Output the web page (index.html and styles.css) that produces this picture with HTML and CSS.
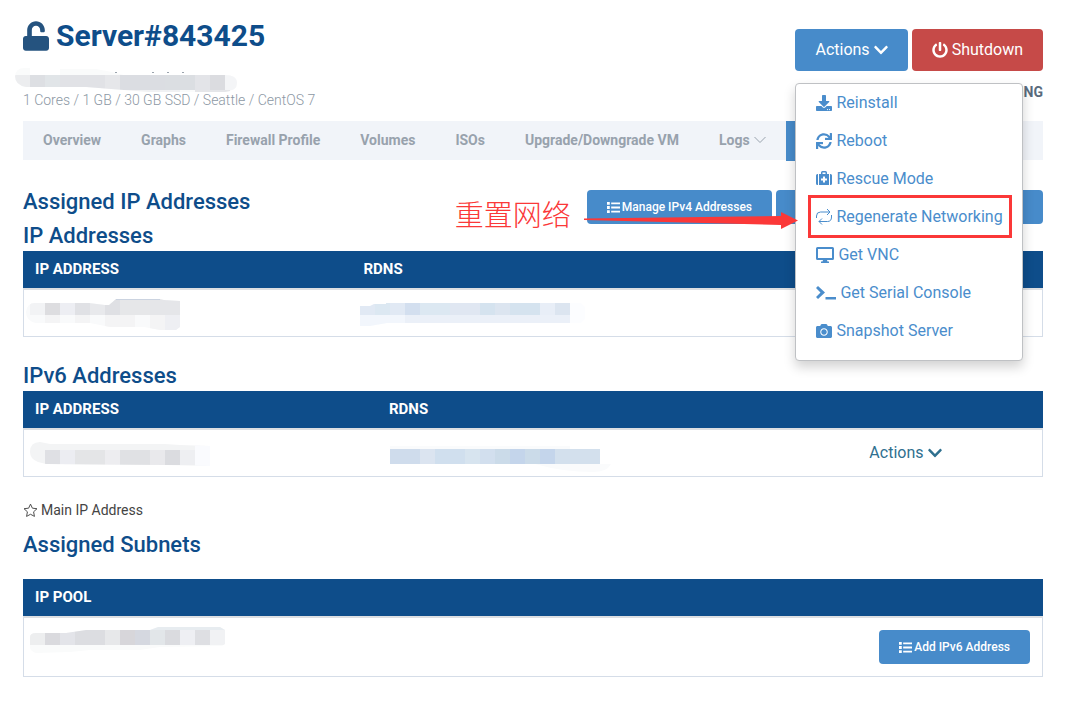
FILE: index.html
```html
<!DOCTYPE html>
<html lang="en">
<head>
<meta charset="utf-8">
<title>Server#843425</title>
<link rel="stylesheet" href="styles.css">
</head>
<body>
<svg class="defs" aria-hidden="true">
  <symbol id="chevron" viewBox="0 0 448 512"><path d="M207.029 381.476L12.686 187.132c-9.373-9.373-9.373-24.569 0-33.941l22.667-22.667c9.357-9.357 24.522-9.375 33.901-.04L224 284.505l154.745-154.021c9.379-9.335 24.544-9.317 33.901.04l22.667 22.667c9.373 9.373 9.373 24.569 0 33.941L240.971 381.476c-9.373 9.372-24.569 9.372-33.942 0z"/></symbol>
  <symbol id="list" viewBox="0 0 14 14"><path d="M0 1h3v3H0zM0 5.500h3v3H0zM0 10h3v3H0zM4.500 1.500H14v2H4.500zM4.500 6H14v2H4.500zM4.500 10.500H14v2H4.500z"/></symbol>
</svg>
<main class="page">
  <header class="top">
    <div class="identity">
      <h1 class="title">
        <svg class="lock" viewBox="0 0 448 512" aria-hidden="true"><path d="M400 256H152V152.900c0-39.600 31.700-72.500 71.300-72.900 40-.4 72.700 32.100 72.700 72v16c0 13.300 10.700 24 24 24h32c13.300 0 24-10.700 24-24v-16C376 68 307.500-.3 223.500 0 139.500.3 72 69.500 72 153.500V256H48c-26.500 0-48 21.500-48 48v160c0 26.500 21.500 48 48 48h352c26.500 0 48-21.500 48-48V304c0-26.500-21.500-48-48-48z"/></svg>
        Server#843425
      </h1>
      <svg class="mask mask-host" width="222" height="26" viewBox="15 67 222 26" aria-hidden="true">
        <clipPath id="c0"><path d="M15 77q0-9 10-9h5v7h30v-6h36l16 3 12 3h101q12 0 12 8t-12 9h-76l-38-3-25-2H26q-11-2-11-11z"/></clipPath>
        <g clip-path="url(#c0)">
          <path fill="#fafbfb" d="M15 67h222v26H15z"/>
          <path fill="#ecedef" d="M15 75h15v15H15z"/><path fill="#dddfe3" d="M30 75h15v15H30z"/><path fill="#e1e5e8" d="M45 75h15v15H45z"/><path fill="#e1e2e6" d="M60 75h45v15H60z"/><path fill="#e6e7ea" d="M105 75h15v15h-15z"/><path fill="#dbdde2" d="M120 75h45v15h-45z"/><path fill="#dbdee2" d="M165 75h30v15h-30z"/><path fill="#e3e4e8" d="M195 75h15v15h-15z"/><path fill="#dbdce0" d="M210 75h15v15h-15z"/><path fill="#f4f5f7" d="M225 75h12v15h-12z"/><path fill="#f0f1f3" d="M105 90h75v3h-75z"/><path fill="#e5e6e9" d="M195 90h35v3h-35z"/>
        </g>
        <path fill="#9aa3ad" d="M115 72h2v1h-2zM152 72h2v1h-2zM167 72h2v1h-2zM182 72h2v1h-2z"/>
      </svg>
      <p class="specs">1 Cores / 1 GB / 30 GB SSD / Seattle / CentOS 7</p>
    </div>
    <div class="controls">
      <div class="button-row">
        <button class="btn btn-large" type="button">Actions <svg class="icon icon-14" aria-hidden="true"><use href="#chevron"/></svg></button>
        <button class="btn btn-large btn-danger" type="button"><svg class="icon" viewBox="0 0 512 512" aria-hidden="true"><path d="M400 54.100c63 45 104 118.600 104 201.900 0 136.800-110.800 247.700-247.500 248C120 504.300 8.200 393 8 256.400 7.900 173.100 48.900 99.300 111.800 54.200c11.700-8.300 28-4.800 35 7.700L162.600 90c5.900 10.500 3.100 23.800-6.600 31-41.500 30.800-68 79.600-68 134.900-.1 92.300 74.500 168.100 168 168.100 91.600 0 168.600-74.200 168-169.100-.3-51.800-24.700-101.800-68.100-134-9.700-7.200-12.400-20.500-6.500-30.900l15.800-28.100c7-12.400 23.200-16.100 34.800-7.800zM296 264V24c0-13.300-10.700-24-24-24h-32c-13.300 0-24 10.700-24 24v240c0 13.300 10.700 24 24 24h32c13.300 0 24-10.700 24-24z"/></svg> Shutdown</button>
      </div>
      <p class="status">RUNNING</p>
      <div class="menu">
        <a href="#" class="menu-item"><svg class="icon" viewBox="0 0 512 512" aria-hidden="true"><path d="M216 0h80c13.300 0 24 10.700 24 24v168h87.700c17.800 0 26.700 21.500 14.100 34.100L269.700 378.300c-7.500 7.500-19.800 7.500-27.300 0L90.100 226.100c-12.600-12.600-3.700-34.100 14.100-34.100H192V24c0-13.300 10.700-24 24-24zm296 376v112c0 13.300-10.700 24-24 24H24c-13.300 0-24-10.700-24-24V376c0-13.300 10.700-24 24-24h146.700l49 49c20.100 20.100 52.500 20.100 72.600 0l49-49H488c13.300 0 24 10.700 24 24zm-124 88c0-11-9-20-20-20s-20 9-20 20 9 20 20 20 20-9 20-20zm64 0c0-11-9-20-20-20s-20 9-20 20 9 20 20 20 20-9 20-20z"/></svg>Reinstall</a>
        <a href="#" class="menu-item"><svg class="icon" viewBox="0 0 512 512" aria-hidden="true"><path d="M440.650 12.570l4 82.770A247.160 247.160 0 0 0 255.830 8C134.730 8 33.910 94.920 12.290 209.820A12 12 0 0 0 24.090 224h49.050a12 12 0 0 0 11.670-9.260 175.910 175.910 0 0 1 317-56.940l-101.460-4.860a12 12 0 0 0-12.570 12v47.410a12 12 0 0 0 12 12H500a12 12 0 0 0 12-12V12a12 12 0 0 0-12-12h-47.370a12 12 0 0 0-11.980 12.570zM255.830 432a175.610 175.610 0 0 1-146-77.800l101.800 4.870a12 12 0 0 0 12.570-12v-47.400a12 12 0 0 0-12-12H12a12 12 0 0 0-12 12V500a12 12 0 0 0 12 12h47.350a12 12 0 0 0 12-12.600l-4.150-82.570A247.170 247.170 0 0 0 255.830 504c121.110 0 221.930-86.920 243.550-201.820a12 12 0 0 0-11.800-14.180h-49.050a12 12 0 0 0-11.670 9.260A175.860 175.860 0 0 1 255.830 432z"/></svg>Reboot</a>
        <a href="#" class="menu-item"><svg class="icon" viewBox="0 0 16 16" aria-hidden="true"><path fill-rule="evenodd" d="M1.500 3H2v11h-.5A1.500 1.500 0 0 1 0 12.500v-8A1.500 1.500 0 0 1 1.500 3zM14 3h.5A1.500 1.500 0 0 1 16 4.500v8a1.500 1.500 0 0 1-1.500 1.500H14zM3 3h2V1.500A1.500 1.500 0 0 1 6.500 0h3A1.500 1.500 0 0 1 11 1.500V3h2v11H3zM6.500 1.500V3h3V1.500zM7 5.500v2H5v2h2v2h2v-2h2v-2H9v-2z"/></svg>Rescue Mode</a>
        <a href="#" class="menu-item menu-item-marked"><svg class="icon icon-line" viewBox="0 0 16 16" aria-hidden="true"><path d="M.5 9V7Q.5 3 4.500 3H14M11 0l3 3-3 3M15.500 6v2Q15.500 12.500 11.500 12.500H3M6 9.500l-3 3 3 3"/></svg>Regenerate Networking</a>
        <a href="#" class="menu-item"><svg class="icon icon-18" viewBox="0 0 18 16" aria-hidden="true"><path fill-rule="evenodd" d="M1.500 0h15A1.500 1.500 0 0 1 18 1.500v10a1.500 1.500 0 0 1-1.500 1.500H11l.5 1.500H13V16H5v-1.500h1.500L7 13H1.500A1.500 1.500 0 0 1 0 11.500v-10A1.500 1.500 0 0 1 1.500 0zM2 2v9h14V2z"/></svg>Get VNC</a>
        <a href="#" class="menu-item"><svg class="icon icon-20" viewBox="0 0 20 16" aria-hidden="true"><path d="M0 3l2-2 7 6.500L2 14l-2-2 4.500-4.500zM9.500 12H20v2.500H9.500z"/></svg>Get Serial Console</a>
        <a href="#" class="menu-item"><svg class="icon" viewBox="0 0 512 512" aria-hidden="true"><path d="M512 144v288c0 26.500-21.500 48-48 48H48c-26.500 0-48-21.500-48-48V144c0-26.500 21.500-48 48-48h88l12.300-32.900c7-18.700 24.900-31.100 44.900-31.100h125.500c20 0 37.900 12.400 44.900 31.100L376 96h88c26.500 0 48 21.500 48 48zM376 288c0-66.200-53.800-120-120-120s-120 53.800-120 120 53.800 120 120 120 120-53.800 120-120zm-32 0c0 48.500-39.500 88-88 88s-88-39.500-88-88 39.500-88 88-88 88 39.500 88 88z"/></svg>Snapshot Server</a>
      </div>
    </div>
  </header>

  <nav class="tabs">
    <a href="#" class="tab">Overview</a>
    <a href="#" class="tab">Graphs</a>
    <a href="#" class="tab">Firewall Profile</a>
    <a href="#" class="tab">Volumes</a>
    <a href="#" class="tab">ISOs</a>
    <a href="#" class="tab">Upgrade/Downgrade VM</a>
    <a href="#" class="tab">Logs <svg class="caret" viewBox="0 0 12 8" aria-hidden="true"><path d="M.5 1L6 6.500 11.500 1"/></svg></a>
    <a href="#" class="tab tab-active" aria-label="Networking"></a>
  </nav>

  <section>
    <div class="section-head">
      <h2 class="heading">Assigned IP Addresses</h2>
      <span class="note" lang="zh">重置网络</span>
      <div class="button-row section-buttons">
        <button class="btn" type="button"><svg class="icon-small" aria-hidden="true"><use href="#list"/></svg> Manage IPv4 Addresses</button>
        <button class="btn btn-wide" type="button" aria-label="Manage IPv6 Addresses"></button>
        <svg class="arrow" width="214" height="17" viewBox="0 0 214 17" aria-hidden="true"><path d="M0 6.500L197 4V0l17 8.500L197 17v-4L0 8z"/></svg>
      </div>
    </div>
    <h2 class="heading">IP Addresses</h2>
    <table class="table">
      <colgroup><col class="col-ip4"><col></colgroup>
      <thead><tr><th>IP ADDRESS</th><th>RDNS</th></tr></thead>
      <tbody><tr>
        <td><svg class="mask" width="156" height="28" viewBox="25 299 156 28" overflow="visible" aria-hidden="true">
          <clipPath id="c1"><path d="M26 312q1-9 9-9h54l16 2h4l7-6h44l4 1 16 1v26l-4 3h-16l-16-3h-34l-20-4H36q-10-2-10-11z"/></clipPath>
          <g clip-path="url(#c1)"><path fill="#f9fafb" d="M25 299h156v32H25z"/><path fill="#f2f3f5" d="M30 299h15v16H30z"/><path fill="#dddde0" d="M45 299h15v16H45z"/><path fill="#edeef3" d="M60 299h15v16H60z"/><path fill="#e0e1e5" d="M75 299h15v16H75z"/><path fill="#e8e9ec" d="M90 299h15v16H90z"/><path fill="#dfe0e4" d="M105 299h15v16h-15z"/><path fill="#e6e7e9" d="M120 299h30v16h-30z"/><path fill="#e5e6e9" d="M150 299h31v16h-31z"/><path fill="#f4f4f5" d="M45 315h15v16H45zM75 315h15v16H75zM105 315h30v16h-30zM150 315h15v16h-15z"/><path fill="#eeeff3" d="M165 315h16v16h-16z"/></g><path fill="#cbd3e0" d="M116 299h44v1h-44z"/></svg></td>
        <td><svg class="mask" width="226" height="22" viewBox="359 302 226 22" overflow="visible" aria-hidden="true">
          <clipPath id="c2"><path d="M360 306h10l4-2h12v-1h195l4 4v12l-4 4H387l-17 3h-10z"/></clipPath>
          <g clip-path="url(#c2)"><path fill="#fcfdff" d="M360 302h226v24H360z"/><path fill="#e1e9f4" d="M360 302h45v13h-45z"/><path fill="#dce8f2" d="M375 302h15v13h-15zM420 302h30v13h-30z"/><path fill="#d3dfef" d="M405 302h15v13h-15z"/><path fill="#e0e7f2" d="M450 302h30v13h-30z"/><path fill="#d5e3ef" d="M480 302h15v13h-15zM510 302h30v13h-30z"/><path fill="#dce5f0" d="M495 302h15v13h-15zM555 302h15v13h-15z"/><path fill="#e8eef7" d="M540 302h15v13h-15z"/><path fill="#f2f6fc" d="M360 315h45v11h-45z"/><path fill="#ebf0f8" d="M405 315h165v11H405z"/></g></svg></td>
      </tr></tbody>
    </table>
  </section>

  <section class="block-v6">
    <h2 class="heading">IPv6 Addresses</h2>
    <table class="table">
      <colgroup><col class="col-ip6"><col><col class="col-action"></colgroup>
      <thead><tr><th>IP ADDRESS</th><th>RDNS</th><th></th></tr></thead>
      <tbody><tr>
        <td><svg class="mask" width="185" height="24" viewBox="25 441 185 24" overflow="visible" aria-hidden="true">
          <clipPath id="c3"><path d="M30 452q0-10 10-10l10 2h115l15 1 30 1v20l-45-1-119-1-8-2q-8-3-8-10z"/></clipPath>
          <g clip-path="url(#c3)"><path fill="#f3f4f5" d="M25 441h185v26H25z"/><path fill="#dfe0e4" d="M45 450h15v15H45z"/><path fill="#ecedf2" d="M60 450h15v15H60z"/><path fill="#e4e5e7" d="M75 450h30v15H75z"/><path fill="#ededf0" d="M105 450h15v15h-15z"/><path fill="#e0e1e4" d="M120 450h30v15h-30z"/><path fill="#e9e9ec" d="M150 450h15v15h-15z"/><path fill="#dbdce0" d="M165 450h15v15h-15z"/><path fill="#eeeff2" d="M180 450h15v15h-15z"/><path fill="#fafbfe" d="M195 441h15v26h-15z"/></g></svg></td>
        <td><svg class="mask mask-rdns6" width="236" height="28" viewBox="375 446 236 28" aria-hidden="true">
          <path fill="#fafbfc" d="M390 447h180v3H390zM375 465h236q-4 8-18 8-30 0-58-8z"/><path fill="#cfdcec" d="M390 450h30v15h-30z"/><path fill="#dbe4f0" d="M420 450h15v15h-15z"/><path fill="#d0dfee" d="M435 450h30v15h-30z"/><path fill="#d7e4ef" d="M465 450h15v15h-15z"/><path fill="#d2dfee" d="M480 450h15v15h-15z"/><path fill="#cbdbe9" d="M495 450h15v15h-15zM525 450h15v15h-15z"/><path fill="#c4d5eb" d="M510 450h15v15h-15zM540 450h15v15h-15z"/><path fill="#d3e0ed" d="M555 450h45v15h-45z"/></svg></td>
        <td><button class="link-button" type="button">Actions <svg class="icon icon-14" aria-hidden="true"><use href="#chevron"/></svg></button></td>
      </tr></tbody>
    </table>
    <p class="legend"><svg class="star" viewBox="0 0 16 16" aria-hidden="true"><path d="M8 1.200l2 4.300 4.900.6-3.600 3.300.9 4.900L8 12l-4.200 2.300.9-4.900L1.100 6.100 6 5.500z"/></svg>Main IP Address</p>
  </section>

  <section>
    <h2 class="heading heading-spaced">Assigned Subnets</h2>
    <table class="table">
      <thead><tr><th>IP POOL</th><th></th></tr></thead>
      <tbody><tr>
        <td class="cell-top"><svg class="mask" width="200" height="28" viewBox="25 626 200 28" aria-hidden="true">
          <clipPath id="c4"><path d="M30 637q0-4 6-4h30l20-3h64l8-3h62l5 3v14l-3 2-62 1-20 3H90l-20 2-34 1q-6-2-6-6z"/></clipPath>
          <g clip-path="url(#c4)"><path fill="#fafbfb" d="M25 626h200v28H25z"/><path fill="#edeeef" d="M30 630h15v15H30z"/><path fill="#dadade" d="M45 630h15v15H45z"/><path fill="#e3e4e9" d="M60 630h15v15H60z"/><path fill="#dcdde1" d="M75 630h30v15H75z"/><path fill="#e7e8ea" d="M105 630h15v15h-15z"/><path fill="#d7d6da" d="M120 630h15v15h-15z"/><path fill="#d5d8e0" d="M135 630h15v15h-15z"/><path fill="#e7ecf0" d="M150 626h75v4h-75z"/><path fill="#e2e6e9" d="M150 630h15v15h-15z"/><path fill="#dadbdf" d="M165 630h15v15h-15z"/><path fill="#eeeff3" d="M180 630h15v15h-15z"/><path fill="#dedfe3" d="M195 630h15v15h-15z"/><path fill="#f1f2f4" d="M210 630h15v15h-15z"/></g></svg></td>
        <td class="cell-button"><button class="btn" type="button"><svg class="icon-small" aria-hidden="true"><use href="#list"/></svg> Add IPv6 Address</button></td>
      </tr></tbody>
    </table>
  </section>
</main>
</body>
</html>
```
FILE: styles.css
```css
* { box-sizing: border-box; }
body {
  margin: 0;
  background: #fff;
  color: #444;
  font: 14px/20px Roboto, "Noto Sans CJK SC", sans-serif;
}
h1, h2, p { margin: 0; }
a { text-decoration: none; }
svg { display: block; fill: currentColor; flex: none; }
.defs { position: absolute; width: 0; height: 0; }
.page { padding: 15px 44px 24px 23px; }

.top { display: flex; justify-content: space-between; height: 106px; }
.title {
  display: flex;
  align-items: center;
  gap: 7px;
  color: #0e4d8a;
  font-size: 30px;
  font-weight: 700;
  line-height: 41px;
}
.lock { width: 26px; height: 30px; color: #25537f; }
.mask-host { margin: 11px 0 -3px -8px; }
.specs { color: #8d98a4; font-weight: 300; }

.controls { position: relative; padding-top: 14px; }
.button-row { display: flex; gap: 4px; }
.btn {
  display: flex;
  align-items: center;
  justify-content: center;
  gap: 2px;
  height: 34px;
  padding: 0 20px;
  border: 0;
  border-radius: 4px;
  background: #478bca;
  color: #fff;
  font: 500 12px/18px Roboto, sans-serif;
  white-space: nowrap;
}
.btn-large { height: 42px; gap: 4px; font-size: 16px; font-weight: 400; }
.btn-danger { background: #c64a48; }
.btn-wide { width: 267px; }
.icon { width: 16px; height: 16px; }
.icon-14 { width: 14px; }
.icon-18 { width: 18px; }
.icon-20 { width: 20px; }
.icon-line { fill: none; stroke: currentColor; stroke-width: 1; }
.icon-small { width: 13px; height: 13px; }
.status {
  margin-top: 11px;
  color: #596b7d;
  font-weight: 700;
  text-align: right;
}
.menu {
  position: absolute;
  z-index: 10;
  top: 68px;
  left: 0;
  width: 228px;
  padding-bottom: 10px;
  border: 1px solid #bfc1c4;
  border-radius: 4px;
  background: #fff;
  box-shadow: 0 6px 12px rgba(0, 0, 0, .18);
}
.menu-item {
  position: relative;
  display: flex;
  align-items: center;
  gap: 4px;
  height: 38px;
  padding: 0 20px;
  color: #4a8dcc;
  font-size: 16px;
  white-space: nowrap;
}
.menu-item-marked::after {
  content: "";
  position: absolute;
  inset: -3px 10px -2px 12px;
  border: 3px solid #fb3838;
}

.tabs { display: flex; height: 39px; background: #f1f4f9; }
.tab {
  display: flex;
  align-items: center;
  gap: 4px;
  padding: 0 20px 2px;
  color: #98a2ad;
  font-weight: 700;
  white-space: nowrap;
}
.tab-active { width: 120px; height: 40px; background: #478bca; }
.caret { width: 12px; height: 8px; fill: none; stroke: currentColor; }

.section-head { display: flex; margin-top: 30px; }
.heading {
  margin-bottom: 3px;
  color: #0e4d8a;
  font-size: 22px;
  font-weight: 500;
  line-height: 24px;
}
.section-head .heading { margin: 0 auto 0 0; }
.heading-spaced { margin: 13px 0 22px; }
.note {
  height: 34px;
  margin-right: 16px;
  color: #fb3838;
  font: 300 29px/46px "Noto Sans CJK SC", sans-serif;
}
.section-buttons { position: relative; }
.arrow { position: absolute; z-index: 20; top: 22px; left: -3px; color: #fb3838; }

.table {
  width: 100%;
  table-layout: fixed;
  border-spacing: 0;
  border-bottom: 1px solid #d5dde8;
}
.col-ip4 { width: 32.2%; }
.col-ip6 { width: 34.7%; }
.col-action { width: 18.3%; }
.table th {
  height: 37px;
  padding: 0 12px 2px;
  background: #0e4d8a;
  color: #fff;
  font-size: 15px;
  font-weight: 700;
  text-align: left;
}
.table td { height: 48px; padding: 0 0 0 8px; border-top: 2px solid #dddfe2; }
.table td:first-child { padding-left: 1px; border-left: 1px solid #d5dde8; }
.table td:last-child { border-right: 1px solid #d5dde8; }
.table .cell-top { padding-top: 8px; vertical-align: top; }
.table .cell-button { height: 60px; padding-right: 12px; }
.cell-button .btn { margin-left: auto; }
.mask-rdns6 { margin: 12px 0 0 -10px; }
.block-v6 { margin-top: 27px; }
.link-button {
  display: flex;
  align-items: center;
  gap: 4px;
  padding: 0 5px;
  border: 0;
  background: none;
  color: #2f708f;
  font: 16px/20px Roboto, sans-serif;
}
.legend { display: flex; align-items: center; gap: 3px; margin-top: 23px; }
.star { width: 15px; height: 15px; fill: none; stroke: currentColor; stroke-width: 1; }
```
